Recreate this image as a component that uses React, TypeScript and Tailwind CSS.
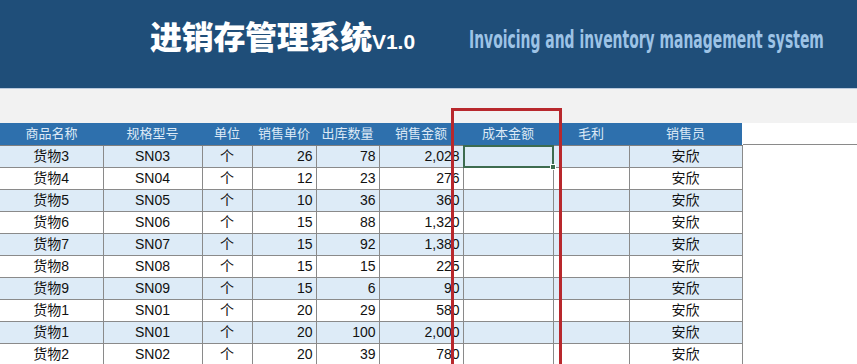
const ROWS = [
  ['货物3', 'SN03', 26, 78],
  ['货物4', 'SN04', 12, 23],
  ['货物5', 'SN05', 10, 36],
  ['货物6', 'SN06', 15, 88],
  ['货物7', 'SN07', 15, 92],
  ['货物8', 'SN08', 15, 15],
  ['货物9', 'SN09', 15, 6],
  ['货物1', 'SN01', 20, 29],
  ['货物1', 'SN01', 20, 100],
  ['货物2', 'SN02', 20, 39],
] as const

const COLS = [
  { label: '商品名称', w: 'w-[103px]' },
  { label: '规格型号', w: 'w-[99px]' },
  { label: '单位', w: 'w-[50px]' },
  { label: '销售单价', w: 'w-[64px]' },
  { label: '出库数量', w: 'w-[63px]' },
  { label: '销售金额', w: 'w-[84px]' },
  { label: '成本金额', w: 'w-[90px]' },
  { label: '毛利', w: 'w-[76px]' },
  { label: '销售员', w: 'w-[113px]' },
]

const FONT = "font-['Liberation_Sans','Noto_Sans_CJK_SC',sans-serif]"

export default function App() {
  return (
    <div className={`relative h-[364px] w-[857px] overflow-hidden bg-white ${FONT}`}>
      <header className="flex h-[89px] items-center border-b border-[#b9c9dc] bg-[#1f4e79] pb-[18px] pl-[150px]">
        <h1 className="flex w-[319px] shrink-0 items-baseline whitespace-nowrap text-white">
          <span className="text-[32px] font-black tracking-[-0.3px] font-['Noto_Sans_CJK_SC',sans-serif]">
            进销存管理系统
          </span>
          <span className="text-[21px] font-bold font-['Liberation_Sans',sans-serif]">V1.0</span>
        </h1>
        <p className="mt-[9px] shrink-0 origin-left scale-x-[0.645] whitespace-nowrap text-[24px] font-bold text-[#9dc3e6] font-['DejaVu_Sans_Condensed','DejaVu_Sans',sans-serif]">
          Invoicing and inventory management system
        </p>
      </header>

      <div className="h-[34px] bg-[#f2f2f2]" />

      <div className="flex">
        <table className="table-fixed border-collapse text-[14px] text-[#111]">
          <colgroup>
            {COLS.map((c) => (
              <col key={c.label} className={c.w} />
            ))}
          </colgroup>
          <thead>
            <tr className="h-[22px] bg-[#2e70ad]">
              {COLS.map((c) => (
                <th
                  key={c.label}
                  className="border-b border-[#7f7f7f] p-0 text-center text-[13px] font-normal text-[#dce9f6]"
                >
                  {c.label}
                </th>
              ))}
            </tr>
          </thead>
          <tbody>
            {ROWS.map(([name, sku, price, qty], i) => {
              const stripe = i % 2 === 0 ? 'bg-[#ddebf7]' : 'bg-white'
              const cell = 'h-[22px] border border-[#8a8a8a] p-0 leading-none'
              return (
                <tr key={i} className={stripe}>
                  <td className={`${cell} border-l-0 text-center`}>{name}</td>
                  <td className={`${cell} text-center`}>{sku}</td>
                  <td className={`${cell} text-center`}>个</td>
                  <td className={`${cell} pr-[3px] text-right`}>{price}</td>
                  <td className={`${cell} pr-[3px] text-right`}>{qty}</td>
                  <td className={`${cell} pr-[3px] text-right`}>{(price * qty).toLocaleString('en-US')}</td>
                  <td className={`${cell} relative`}>
                    {i === 0 && (
                      <div className="absolute inset-[-1px] border-2 border-[#3d6b4f]">
                        <div className="absolute -bottom-[4px] -right-[4px] h-[6px] w-[6px] border border-white bg-[#3d6b4f]" />
                      </div>
                    )}
                  </td>
                  <td className={cell} />
                  <td className={`${cell} text-center`}>安欣</td>
                </tr>
              )
            })}
          </tbody>
        </table>
        <div className="h-[22px] flex-1 border-b border-[#8a8a8a]" />
      </div>

      <div className="pointer-events-none absolute left-[451px] top-[108px] h-[300px] w-[111px] border-[3px] border-[#b8282d]" />
    </div>
  )
}
